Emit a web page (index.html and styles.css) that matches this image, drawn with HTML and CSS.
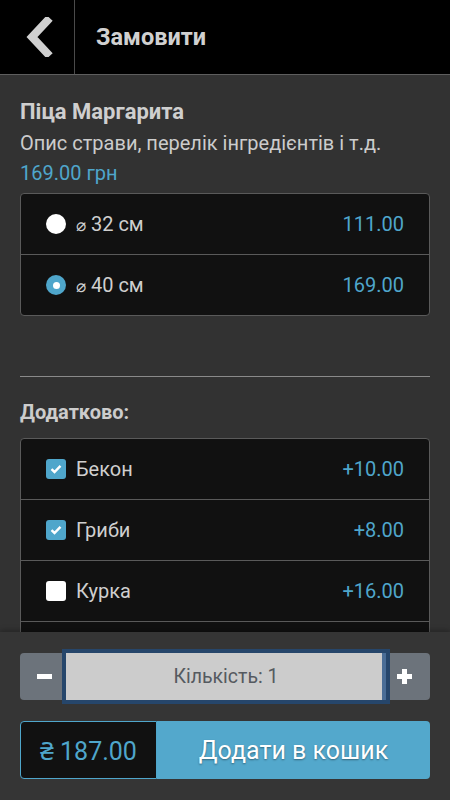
FILE: index.html
```html
<!DOCTYPE html>
<html lang="uk">
<head>
<meta charset="utf-8">
<title>Замовити</title>
<link rel="stylesheet" href="styles.css">
</head>
<body>
<div class="app">
  <header class="topbar">
    <button class="back" aria-label="Назад">
      <svg width="28" height="40" viewBox="0 0 28 40"><polyline points="22,4 7,20 22,36" fill="none" stroke="#d0d0d0" stroke-width="8" stroke-linejoin="miter" stroke-linecap="square"/></svg>
    </button>
    <h1 class="title">Замовити</h1>
  </header>
  <main class="content">
    <h2 class="dish">Піца Маргарита</h2>
    <p class="desc">Опис страви, перелік інгредієнтів і т.д.</p>
    <p class="price">169.00 грн</p>
    <ul class="list">
      <li class="row">
        <span class="radio"></span>
        <span class="label"><span class="diam">⌀</span> 32 см</span>
        <span class="amount">111.00</span>
      </li>
      <li class="row">
        <span class="radio checked"></span>
        <span class="label"><span class="diam">⌀</span> 40 см</span>
        <span class="amount">169.00</span>
      </li>
    </ul>
    <hr class="sep">
    <h3 class="section">Додатково:</h3>
    <ul class="list">
      <li class="row">
        <span class="check checked"><svg width="12" height="10" viewBox="0 0 12 10"><polyline points="1.5,5.2 4.5,8 10.5,1.8" fill="none" stroke="#fff" stroke-width="2.4"/></svg></span>
        <span class="label">Бекон</span>
        <span class="amount">+10.00</span>
      </li>
      <li class="row">
        <span class="check checked"><svg width="12" height="10" viewBox="0 0 12 10"><polyline points="1.5,5.2 4.5,8 10.5,1.8" fill="none" stroke="#fff" stroke-width="2.4"/></svg></span>
        <span class="label">Гриби</span>
        <span class="amount">+8.00</span>
      </li>
      <li class="row">
        <span class="check"></span>
        <span class="label">Курка</span>
        <span class="amount">+16.00</span>
      </li>
      <li class="row">
        <span class="check"></span>
        <span class="label">Сир</span>
        <span class="amount">+12.00</span>
      </li>
    </ul>
  </main>
  <footer class="bottom">
    <div class="qty">
      <div class="qbtn minus"><span class="bar"></span></div>
      <div class="qinput">Кількість: 1</div>
      <div class="qbtn plus"><span class="bar"></span><span class="bar vert"></span></div>
    </div>
    <div class="add">
      <div class="total">₴ 187.00</div>
      <div class="addbtn">Додати в кошик</div>
    </div>
  </footer>
</div>
</body>
</html>
```
FILE: styles.css
```css
* { box-sizing: border-box; }
html, body { margin: 0; padding: 0; }
body {
  font-family: Roboto, "Noto Sans", sans-serif;
  background: #333;
  color: #cccccc;
}
.app {
  height: 800px;
  display: flex;
  flex-direction: column;
  overflow: hidden;
}
.topbar {
  flex: none;
  height: 75px;
  background: #000;
  border-bottom: 1px solid #5e5e5e;
  display: flex;
  align-items: stretch;
}
.back {
  width: 75px;
  border: none;
  border-right: 1px solid #4a4a4a;
  background: transparent;
  padding: 0 0 0 4px;
  display: flex;
  align-items: center;
  justify-content: center;
}
.back svg { display: block; }
.title {
  margin: 0;
  padding-left: 21px;
  font-size: 23.5px;
  font-weight: 700;
  color: #d0d0d0;
  line-height: 74px;
}
.content {
  flex: 1;
  min-height: 0;
  overflow: hidden;
  background: #323232;
  padding: 21px 20px 0;
}
.dish {
  margin: 0;
  font-size: 22px;
  font-weight: 700;
  line-height: 32px;
  color: #cfcfcf;
}
.desc {
  margin: 0;
  font-size: 20px;
  line-height: 30px;
  color: #cccccc;
}
.price {
  margin: 0;
  font-size: 20px;
  line-height: 30px;
  color: #4fa6cb;
}
.list {
  list-style: none;
  margin: 5px 0 0;
  padding: 0;
  background: #111;
  border: 1px solid #5a5a5a;
  border-radius: 4px;
}
.row {
  height: 61px;
  display: flex;
  align-items: center;
  padding: 0 25px 0 25px;
  border-top: 1px solid #5a5a5a;
  font-size: 20px;
}
.row:first-child { height: 60px; border-top: none; }
.label { flex: 1; margin-left: 10px; color: #cfcfcf; }
.diam { font-size: 17px; }
.amount { color: #4fa6cb; }
.radio {
  width: 20px;
  height: 20px;
  border-radius: 50%;
  background: #fff;
  flex: none;
  position: relative;
}
.radio.checked {
  background: #4fa6cb;
}
.radio.checked::after {
  content: "";
  position: absolute;
  left: 6.5px;
  top: 6.5px;
  width: 7px;
  height: 7px;
  border-radius: 50%;
  background: #fff;
}
.check {
  width: 20px;
  height: 20px;
  border-radius: 3px;
  background: #fff;
  flex: none;
  display: flex;
  align-items: center;
  justify-content: center;
}
.check.checked { background: #4fa6cb; }
.sep {
  margin: 60px 0 0;
  border: none;
  border-top: 1px solid #8a8a8a;
  height: 0;
}
.section {
  margin: 20px 0 0;
  font-size: 20px;
  font-weight: 700;
  line-height: 30px;
  color: #cccccc;
}
.section + .list { margin-top: 11px; }
.bottom {
  flex: none;
  height: 168px;
  background: #353535;
  box-shadow: 0 -2px 5px rgba(0,0,0,0.25);
  padding: 21px 20px 0;
  position: relative;
}
.qty {
  display: flex;
  height: 47px;
}
.qbtn {
  width: 46px;
  background: #6c737b;
  position: relative;
}
.minus { border-radius: 4px 0 0 4px; }
.plus { width: 44px; border-radius: 0 4px 4px 0; }
.bar {
  position: absolute;
  top: 21px;
  width: 15px;
  height: 5px;
  background: #fff;
}
.minus .bar { left: 17px; }
.plus .bar { left: 11px; }
.plus .bar.vert {
  left: 16px;
  top: 16px;
  width: 5px;
  height: 15px;
}
.qinput {
  flex: 1;
  background: #cccccc;
  color: #555a60;
  font-size: 19.5px;
  display: flex;
  align-items: center;
  justify-content: center;
  box-shadow: 0 0 0 4px #26466b;
  border-right: 4px solid #4a6d96;
  padding-left: 4px;
  position: relative;
  z-index: 1;
}
.add {
  margin-top: 21px;
  display: flex;
  height: 58px;
}
.total {
  width: 137px;
  background: #111;
  border: 1px solid #4fa6cb;
  border-radius: 4px 0 0 4px;
  color: #4fa6cb;
  font-size: 25px;
  display: flex;
  align-items: center;
  justify-content: center;
}
.addbtn {
  flex: 1;
  background: #53a8cc;
  border-radius: 0 4px 4px 0;
  color: #fff;
  font-size: 25px;
  text-shadow: 0 1px 2px rgba(0,0,0,0.4);
  display: flex;
  align-items: center;
  justify-content: center;
}
```
